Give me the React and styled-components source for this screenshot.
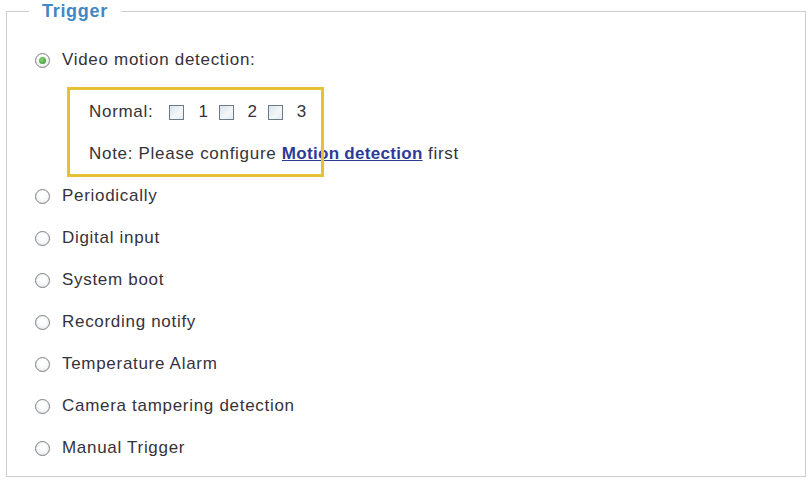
import React from 'react';
import styled, { createGlobalStyle } from 'styled-components';

const GlobalStyle = createGlobalStyle`
  html, body {
    margin: 0;
    padding: 0;
    background: #ffffff;
  }
  body {
    font-family: "Liberation Sans", Arial, sans-serif;
    color: #3a363e;
  }
`;

const Page = styled.div`
  padding: 2px 3px 0 6px;
`;

const Box = styled.fieldset`
  margin: 0;
  padding: 0;
  border: 1px solid #cdcdcd;
  min-width: 0;
`;

const Legend = styled.legend`
  margin-left: 22px;
  padding: 0 13px;
  font-size: 18px;
  line-height: 18px;
  font-weight: bold;
  letter-spacing: 0.7px;
  color: #3f88c4;
`;

const Content = styled.div`
  padding: 19px 0 7px 28px;
`;

const Row = styled.label`
  display: flex;
  align-items: center;
  height: 42px;
  font-size: 17px;
  letter-spacing: 0.7px;
  color: #36323a;
`;

const Radio = styled.input.attrs({ type: 'radio', name: 'trigger' })`
  appearance: none;
  box-sizing: border-box;
  margin: 0 12px 0 0;
  width: 15px;
  height: 15px;
  border-radius: 50%;
  border: 1.5px solid #7c7f82;
  background: radial-gradient(circle at 50% 40%, #ffffff 30%, #dfe3e7 100%);
  display: grid;
  place-items: center;
  flex: none;
  &:checked::after {
    content: '';
    width: 7px;
    height: 7px;
    border-radius: 50%;
    background: radial-gradient(circle at 40% 40%, #8ad874, #2f8a2a);
  }
`;

const Sub = styled.div`
  position: relative;
  padding: 10px 0 0 54px;
`;

const Highlight = styled.div`
  position: absolute;
  left: 32px;
  top: 6px;
  width: 257px;
  height: 90px;
  box-sizing: border-box;
  border: 3px solid #e6c133;
  pointer-events: none;
`;

const Line = styled.div`
  display: flex;
  align-items: center;
  height: 42px;
  font-size: 17px;
  letter-spacing: 0.7px;
  color: #36323a;
  white-space: pre;
`;

const Caption = styled.span`
  margin-right: 16px;
`;

const Check = styled.input.attrs({ type: 'checkbox' })`
  appearance: none;
  box-sizing: border-box;
  margin: 0;
  width: 15px;
  height: 15px;
  border: 1.5px solid #6a7a88;
  background: linear-gradient(135deg, #d8e4ec 0%, #f5f7f8 60%, #e6ebee 100%);
  flex: none;
`;

const Num = styled.span`
  margin: 0 10px 0 14px;
`;

const Link = styled.a`
  color: #2e3a98;
  font-weight: bold;
  text-decoration: underline;
  letter-spacing: 0.3px;
  cursor: pointer;
`;

const triggers = [
  'Periodically',
  'Digital input',
  'System boot',
  'Recording notify',
  'Temperature Alarm',
  'Camera tampering detection',
  'Manual Trigger',
];

export default function App() {
  return (
    <Page>
      <GlobalStyle />
      <Box>
        <Legend>Trigger</Legend>
        <Content>
          <Row>
            <Radio defaultChecked />
            Video motion detection:
          </Row>
          <Sub>
            <Line>
              <Caption>Normal:</Caption>
              {[1, 2, 3].map((n) => (
                <React.Fragment key={n}>
                  <Check />
                  <Num>{n}</Num>
                </React.Fragment>
              ))}
            </Line>
            <Line>
              Note: Please configure <Link>Motion detection</Link> first
            </Line>
            <Highlight />
          </Sub>
          {triggers.map((t) => (
            <Row key={t}>
              <Radio />
              {t}
            </Row>
          ))}
        </Content>
      </Box>
    </Page>
  );
}
